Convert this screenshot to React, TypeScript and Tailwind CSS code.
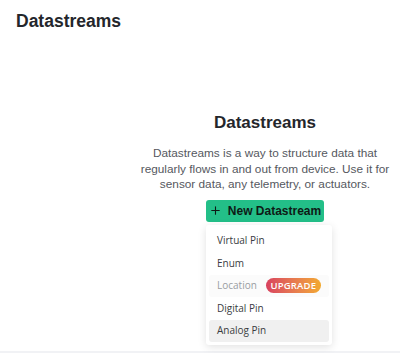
import { Plus } from "lucide-react";

const menuItems = [
  { label: "Virtual Pin" },
  { label: "Enum" },
  { label: "Location", locked: true },
  { label: "Digital Pin" },
  { label: "Analog Pin", active: true },
];

export default function App() {
  return (
    <div className="w-[400px] h-[353px] bg-white overflow-hidden flex flex-col font-['Liberation_Sans',Arial,sans-serif]">
      <div className="flex-1 flex flex-col">
        <h1 className="pl-4 pt-[11px] text-[17.5px] font-bold text-[#24262b] leading-[20px]">Datastreams</h1>

        <div className="flex">
          <div className="w-[130px] shrink-0" />
          <div className="flex-1 flex flex-col items-center pt-[82px]">
            <h2 className="text-[17px] font-bold text-[#24262b] leading-[20px]">Datastreams</h2>
            <p className="mt-[13px] text-center text-[11.8px] leading-[15.5px] text-[#55585e] whitespace-nowrap">
              Datastreams is a way to structure data that
              <br />
              regularly flows in and out from device. Use it for
              <br />
              sensor data, any telemetry, or actuators.
            </p>

            <div className="relative mt-[7px]">
              <button className="flex items-center gap-[6px] h-[22px] w-[118px] justify-center rounded-[3px] bg-[#23bf88] text-[#0e1a15] text-[12px] font-bold">
                <Plus size={13} strokeWidth={2} />
                New Datastream
              </button>

              <div className="absolute left-0 top-[25px] w-[126px] bg-white rounded-[3px] shadow-[0_2px_8px_rgba(0,0,0,0.12)] px-[3px] pt-[5px] pb-[3px] font-['Open_Sans',sans-serif]">
                {menuItems.map((item) => (
                  <div
                    key={item.label}
                    className={`flex items-center h-[22.5px] px-[8px] rounded-[3px] text-[10px] ${
                      item.active ? "bg-[#f0f0f0] text-[#3a3d42]" : item.locked ? "bg-[#fbfbfb] text-[#9a9da2]" : "text-[#3a3d42]"
                    }`}
                  >
                    {item.label}
                    {item.locked && (
                      <span className="ml-[9px] h-[15px] w-[55px] rounded-full bg-gradient-to-r from-[#d8415e] to-[#f2a92e] text-white text-[9.5px] font-semibold flex items-center justify-center tracking-[0.2px]">
                        UPGRADE
                      </span>
                    )}
                  </div>
                ))}
              </div>
            </div>
          </div>
        </div>
      </div>
      <div className="h-[2px] bg-[#f1f2f5]" />
    </div>
  );
}
